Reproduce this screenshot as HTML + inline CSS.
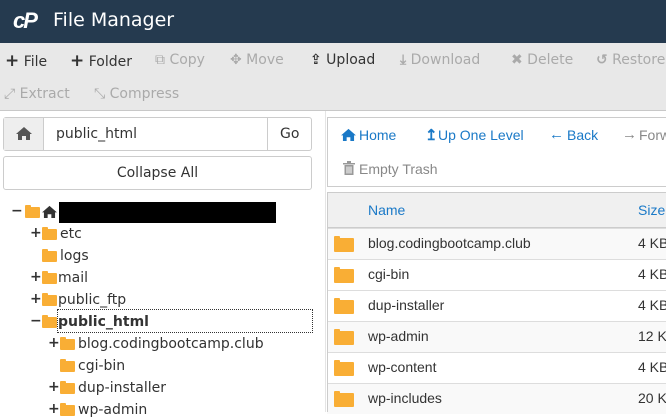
<!DOCTYPE html>
<html><head><meta charset="utf-8"><style>
*{box-sizing:border-box;margin:0;padding:0}
body{width:666px;height:412px;overflow:hidden;background:#fff;font-family:"DejaVu Sans","Liberation Sans",sans-serif;position:relative;color:#333}
.a{position:absolute;white-space:nowrap}
.hdr{left:0;top:0;width:666px;height:43px;background:#253a4f}
.tb{left:0;top:43px;width:666px;height:68px;background:#e8e8e8;border-bottom:1px solid #c8c8c8}
.t{font-size:14px;color:#333}
.g{color:#aaa}
.f{font-family:"Liberation Sans",sans-serif}
.fold{position:absolute;width:15px;height:11px;background:#f9ae35;border-radius:1px}
.fold:before{content:"";position:absolute;left:0;top:-2px;width:6px;height:3px;background:#f9ae35;border-radius:1px 1px 0 0}
.tr{font-size:14px;color:#333}
.row{position:absolute;left:327px;width:339px;height:31px;border-top:1px solid #ddd}
.row .fold{left:7px;top:9px;width:20px;height:14px}
.row span{position:absolute;left:41px;top:6px;font-family:"Liberation Sans",sans-serif;font-size:14px;color:#333;white-space:nowrap}
.row b{position:absolute;left:311px;top:6px;font-weight:normal;font-family:"Liberation Sans",sans-serif;font-size:14px;color:#333;white-space:nowrap}
svg{position:absolute}
</style></head><body>
<div class="a hdr"></div>
<div class="a" style="left:13px;top:8px;font:italic bold 22px 'Liberation Sans',sans-serif;color:#fff;letter-spacing:-2px">cP</div>
<div class="a" style="left:53px;top:9px;font-size:19px;color:#fff">File Manager</div>
<div class="a tb"></div>
<div class="a t" style="left:5px;top:51px"><b style="font-size:17px">+</b> File</div>
<div class="a t" style="left:70px;top:51px"><b style="font-size:17px">+</b> Folder</div>
<div class="a t g" style="left:155px;top:52px">⧉ Copy</div>
<div class="a t g" style="left:230px;top:52px">✥ Move</div>
<div class="a t" style="left:310px;top:52px"><b>⇪</b> Upload</div>
<div class="a t g" style="left:400px;top:52px"><b>⤓</b> Download</div>
<div class="a t g" style="left:511px;top:52px">✖ Delete</div>
<div class="a t g" style="left:596px;top:52px"><b>↺</b> Restore</div>
<div class="a t g" style="left:4px;top:86px">⤢ Extract</div>
<div class="a t g" style="left:94px;top:86px">⤡ Compress</div>

<div class="a" style="left:3px;top:117px;width:309px;height:34px;border:1px solid #ccc;border-radius:3px;background:#fff"></div>
<div class="a" style="left:4px;top:118px;width:40px;height:32px;background:#eee;border-right:1px solid #ccc"></div>
<svg style="left:16px;top:126px" width="16" height="14" viewBox="0 0 16 14"><path d="M8 1L0 8h2v6h4V10h4v4h4V8h2z" fill="#555"/></svg>
<div class="a" style="left:267px;top:118px;width:1px;height:32px;background:#ccc"></div>
<div class="a t" style="left:56px;top:126px">public_html</div>
<div class="a t" style="left:280px;top:126px">Go</div>
<div class="a" style="left:3px;top:156px;width:309px;height:34px;border:1px solid #ccc;border-radius:3px;text-align:center;line-height:32px;font-size:14px">Collapse All</div>
<div class="a" style="left:325px;top:111px;width:1px;height:301px;background:#e5e5e5"></div>

<div class="a tr" style="left:11px;top:203px;font-weight:bold">−</div>
<div class="fold" style="left:25px;top:207px"></div>
<svg style="left:42px;top:205px" width="15" height="13" viewBox="0 0 16 14"><path d="M8 1L0 8h2v6h4V10h4v4h4V8h2z" fill="#333"/></svg>
<div class="a" style="left:59px;top:202px;width:217px;height:21px;background:#000"></div>
<div class="a tr" style="left:30px;top:225px;font-weight:bold">+</div><div class="fold" style="left:42px;top:229px"></div><div class="a tr" style="left:60px;top:226px">etc</div>
<div class="fold" style="left:42px;top:251px"></div><div class="a tr" style="left:60px;top:248px">logs</div>
<div class="a tr" style="left:30px;top:269px;font-weight:bold">+</div><div class="fold" style="left:42px;top:273px"></div><div class="a tr" style="left:58px;top:270px">mail</div>
<div class="a tr" style="left:30px;top:291px;font-weight:bold">+</div><div class="fold" style="left:42px;top:295px"></div><div class="a tr" style="left:58px;top:292px">public_ftp</div>
<div class="a" style="left:57px;top:309px;width:256px;height:24px;border:1px dotted #333"></div>
<div class="a tr" style="left:30px;top:313px;font-weight:bold">−</div><div class="fold" style="left:42px;top:317px"></div><div class="a tr" style="left:58px;top:314px;font-weight:bold">public_html</div>
<div class="a tr" style="left:48px;top:335px;font-weight:bold">+</div><div class="fold" style="left:60px;top:339px"></div><div class="a tr" style="left:78px;top:336px">blog.codingbootcamp.club</div>
<div class="fold" style="left:60px;top:361px"></div><div class="a tr" style="left:78px;top:358px">cgi-bin</div>
<div class="a tr" style="left:48px;top:379px;font-weight:bold">+</div><div class="fold" style="left:60px;top:383px"></div><div class="a tr" style="left:78px;top:380px">dup-installer</div>
<div class="a tr" style="left:48px;top:401px;font-weight:bold">+</div><div class="fold" style="left:60px;top:405px"></div><div class="a tr" style="left:78px;top:402px">wp-admin</div>

<div class="a" style="left:327px;top:117px;width:345px;height:70px;border:1px solid #ccc"></div>
<svg style="left:341px;top:128px" width="15" height="13" viewBox="0 0 16 14"><path d="M8 1L0 8h2v6h4V10h4v4h4V8h2z" fill="#1a79c7"/></svg>
<div class="a f" style="left:359px;top:127px;font-size:14px;color:#1a79c7">Home</div>
<div class="a f" style="left:425px;top:126px;font-size:15px;font-weight:bold;color:#1a79c7">↥</div>
<div class="a f" style="left:438px;top:127px;font-size:14px;color:#1a79c7">Up One Level</div>
<div class="a f" style="left:549px;top:126px;font-size:15px;font-weight:bold;color:#1a79c7">←</div>
<div class="a f" style="left:567px;top:127px;font-size:14px;color:#1a79c7">Back</div>
<div class="a f" style="left:622px;top:126px;font-size:15px;font-weight:bold;color:#888">→</div>
<div class="a f" style="left:639px;top:127px;font-size:14px;color:#888">Forw</div>
<svg style="left:343px;top:161px" width="12" height="14" viewBox="0 0 12 14"><path d="M0 2h12v1.5H0zM4 0h4v2H4zM1.5 4h9v10h-9z" fill="#999"/><path d="M4 5.5v7M6 5.5v7M8 5.5v7" stroke="#fff" stroke-width="1"/></svg>
<div class="a f" style="left:359px;top:161px;font-size:14px;color:#888">Empty Trash</div>

<div class="a" style="left:327px;top:192px;width:345px;height:36px;background:#f0f0f0;border:1px solid #ccc"></div>
<div class="a f" style="left:368px;top:202px;font-size:14px;color:#1a79c7">Name</div>
<div class="a f" style="left:638px;top:202px;font-size:14px;color:#1a79c7">Size</div>
<div class="row" style="top:228px;background:#f9f9f9"><div class="fold"></div><span>blog.codingbootcamp.club</span><b>4 KB</b></div>
<div class="row" style="top:259px;background:#fff"><div class="fold"></div><span>cgi-bin</span><b>4 KB</b></div>
<div class="row" style="top:290px;background:#fff"><div class="fold"></div><span>dup-installer</span><b>4 KB</b></div>
<div class="row" style="top:321px;background:#f9f9f9"><div class="fold"></div><span>wp-admin</span><b>12 KB</b></div>
<div class="row" style="top:352px;background:#fff"><div class="fold"></div><span>wp-content</span><b>4 KB</b></div>
<div class="row" style="top:383px;background:#f9f9f9"><div class="fold"></div><span>wp-includes</span><b>20 KB</b></div>
<div class="a" style="left:327px;top:228px;width:1px;height:184px;background:#ccc"></div>
</body></html>
